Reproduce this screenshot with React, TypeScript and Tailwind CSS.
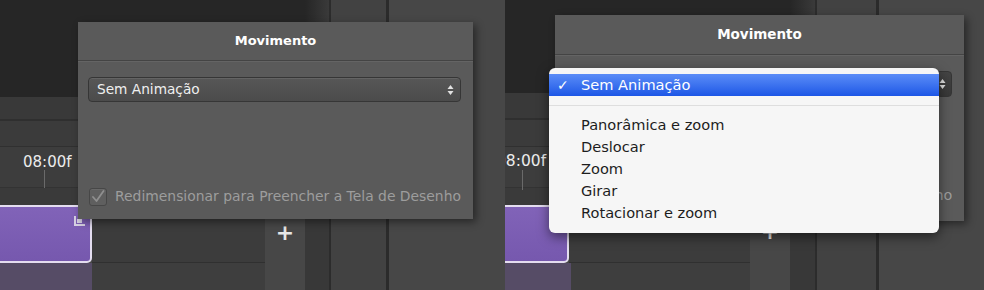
import React from "react";

function UpDown() {
  return (
    <svg width="7" height="12" viewBox="0 0 7 12" className="shrink-0">
      <path d="M0.5 5 L3.5 1 L6.5 5 Z" fill="#e2e2e2" />
      <path d="M0.5 7 L3.5 11 L6.5 7 Z" fill="#e2e2e2" />
    </svg>
  );
}

function CheckBox() {
  return (
    <div className="flex h-[18px] w-[18px] shrink-0 items-center justify-center rounded-[3px] border border-[#474747] bg-[#5f5f5f] shadow-[inset_0_1px_0_rgba(255,255,255,0.06)]">
      <svg width="14" height="13" viewBox="0 0 14 13">
        <path d="M2 7 L5.5 11 L12.5 1" fill="none" stroke="#8f8f8f" strokeWidth="1.8" strokeLinecap="round" strokeLinejoin="round" />
      </svg>
    </div>
  );
}

function ClipIcon() {
  return (
    <svg width="12" height="10" viewBox="0 0 12 10">
      <path d="M1 0 L1 9 L11 9" fill="none" stroke="#d8d2e4" strokeWidth="2" />
      <rect x="3" y="3" width="5" height="4" fill="#d8d2e4" />
    </svg>
  );
}

function LeftScene() {
  return (
    <div className="relative h-full w-[505px] shrink-0 overflow-hidden">
      <div className="flex h-full">
        <div className="flex w-[305px] flex-col">
          <div className="h-[97px] bg-[#262626]" />
          <div className="flex flex-1">
            <div className="flex w-[265px] flex-col">
              <div className="h-[24px] border-b-2 border-[#2f2f2f] bg-[#393939]" />
              <div className="h-[26px] border-b border-[#303030] bg-[#3b3b3b]" />
              <div className="relative h-[41px] border-b border-[#333333] bg-[#3d3d3d]">
                <span className="absolute left-[23px] top-[5px] text-[15px] leading-[20px] text-[#ececec]">08:00f</span>
                <div className="absolute left-[44px] top-[23px] h-[18px] w-px bg-[#6a6a6a]" />
              </div>
              <div className="h-[17px] bg-[#3a3a3a]" />
              <div className="flex h-[58px]">
                <div className="relative w-[92px] rounded-br-[5px] border-y-2 border-r-2 border-[#e4ddf0] bg-gradient-to-b from-[#8163b8] to-[#7658ae]">
                  <div className="absolute right-[4px] top-[9px]">
                    <ClipIcon />
                  </div>
                </div>
                <div className="flex-1 border-b border-[#303030] bg-[#3c3c3c]" />
              </div>
              <div className="flex flex-1">
                <div className="w-[92px] bg-[#564c66]" />
                <div className="flex-1 bg-[#3e3e3e]" />
              </div>
            </div>
            <div className="flex w-[40px] justify-center bg-[#474747] pt-[124px]">
              <span className="text-[22px] font-bold leading-[24px] text-[#e6e6e6]">+</span>
            </div>
          </div>
        </div>
        <div className="flex w-[26px] flex-col border-r-[2px] border-[#2c2c2c]">
          <div className="h-[97px] bg-gradient-to-r from-[#262626] to-[#3a3a3a]" />
          <div className="flex-1 bg-[#383838]" />
        </div>
        <div className="w-[55px] bg-[#424242]" />
        <div className="w-[3px] bg-[#2b2b2b]" />
        <div className="flex-1 bg-[#474747]" />
      </div>

      <div className="absolute left-[78px] top-[22px] flex h-[197px] w-[395px] flex-col bg-[#5a5a5a] shadow-[3px_3px_8px_rgba(0,0,0,0.45)]">
        <div className="flex h-[39px] items-center justify-center border-b border-[#444444] text-[13px] font-bold text-white">
          Movimento
        </div>
        <div className="h-px bg-[#646464]" />
        <div className="ml-[10px] mr-[12px] mt-[15px] flex h-[25px] items-center justify-between rounded-[4px] border border-[#363636] bg-gradient-to-b from-[#575757] to-[#4b4b4b] pl-[8px] pr-[6px] text-[13.7px] text-[#efefef] shadow-[inset_0_1px_0_rgba(255,255,255,0.08)]">
          <span>Sem Animação</span>
          <UpDown />
        </div>
        <div className="mb-[12px] ml-[11px] mt-auto flex items-center gap-[8px]">
          <CheckBox />
          <span className="whitespace-nowrap text-[13.9px] text-[#9d9d9d]">
            Redimensionar para Preencher a Tela de Desenho
          </span>
        </div>
      </div>
    </div>
  );
}

function RightScene() {
  const items = ["Panorâmica e zoom", "Deslocar", "Zoom", "Girar", "Rotacionar e zoom"];
  return (
    <div className="relative h-full w-[479px] shrink-0 overflow-hidden">
      <div className="flex h-full">
        <div className="flex w-[285px] flex-col">
          <div className="h-[93px] bg-[#262626]" />
          <div className="flex flex-1">
            <div className="flex w-[245px] flex-col">
              <div className="h-[27px] border-b-2 border-[#2f2f2f] bg-[#393939]" />
              <div className="h-[27px] border-b border-[#303030] bg-[#3b3b3b]" />
              <div className="relative h-[41px] border-b border-[#333333] bg-[#3d3d3d]">
                <span className="absolute left-[-9px] top-[4px] text-[15.5px] leading-[20px] text-[#ececec]">08:00f</span>
                <div className="absolute left-[17px] top-[23px] h-[20px] w-px bg-[#6a6a6a]" />
              </div>
              <div className="h-[17px] bg-[#3a3a3a]" />
              <div className="flex h-[58px]">
                <div className="relative w-[64px] rounded-br-[5px] border-y-2 border-r-2 border-[#e4ddf0] bg-gradient-to-b from-[#8163b8] to-[#7658ae]" />
                <div className="flex-1 border-b border-[#303030] bg-[#3c3c3c]" />
              </div>
              <div className="flex flex-1">
                <div className="w-[66px] bg-[#564c66]" />
                <div className="flex-1 bg-[#3e3e3e]" />
              </div>
            </div>
            <div className="flex w-[40px] justify-center bg-[#474747] pt-[127px]">
              <span className="text-[22px] font-bold leading-[24px] text-[#e6e6e6]">+</span>
            </div>
          </div>
        </div>
        <div className="flex w-[27px] flex-col border-r-[2px] border-[#2c2c2c]">
          <div className="h-[93px] bg-gradient-to-r from-[#262626] to-[#3a3a3a]" />
          <div className="flex-1 bg-[#383838]" />
        </div>
        <div className="w-[59px] bg-[#424242]" />
        <div className="w-[3px] bg-[#2b2b2b]" />
        <div className="flex-1 bg-[#474747]" />
      </div>

      <div className="absolute left-[50px] top-[15px] flex h-[206px] w-[409px] flex-col bg-[#5a5a5a] shadow-[3px_3px_8px_rgba(0,0,0,0.45)]">
        <div className="flex h-[40px] items-center justify-center border-b border-[#444444] text-[13.5px] font-bold text-white">
          Movimento
        </div>
        <div className="h-px bg-[#646464]" />
        <div className="ml-[10px] mr-[12px] mt-[15px] flex h-[26px] items-center justify-between rounded-[4px] border border-[#363636] bg-gradient-to-b from-[#444444] to-[#383838] pl-[8px] pr-[5px] text-[14.2px] text-[#efefef]">
          <span>Sem Animação</span>
          <UpDown />
        </div>
        <div className="mb-[14px] ml-[13px] mt-auto flex items-center gap-[8px]">
          <CheckBox />
          <span className="whitespace-nowrap text-[14.4px] text-[#9d9d9d]">
            Redimensionar para Preencher a Tela de Desenho
          </span>
        </div>
      </div>

      <div className="absolute left-[44px] top-[68px] flex h-[165px] w-[390px] flex-col rounded-[6px] bg-[#f6f6f6] pt-[6px] shadow-[0_4px_12px_rgba(0,0,0,0.5)]">
        <div className="relative flex h-[22px] items-center bg-gradient-to-b from-[#5b8cf7] to-[#1d56e6] pl-[32px] text-[14.6px] text-white">
          <span className="absolute left-[8px] top-[1px] text-[14px] font-bold">✓</span>
          <span>Sem Animação</span>
        </div>
        <div className="flex h-[18px] items-center">
          <div className="h-px w-full bg-[#dedede]" />
        </div>
        {items.map((t) => (
          <div key={t} className="flex h-[22px] items-center pl-[32px] text-[14.6px] text-[#1d1d1d]">
            {t}
          </div>
        ))}
      </div>
    </div>
  );
}

export default function App() {
  return (
    <div className="flex h-[290px] w-[984px] overflow-hidden bg-[#474747] font-['DejaVu_Sans',sans-serif]">
      <LeftScene />
      <RightScene />
    </div>
  );
}
